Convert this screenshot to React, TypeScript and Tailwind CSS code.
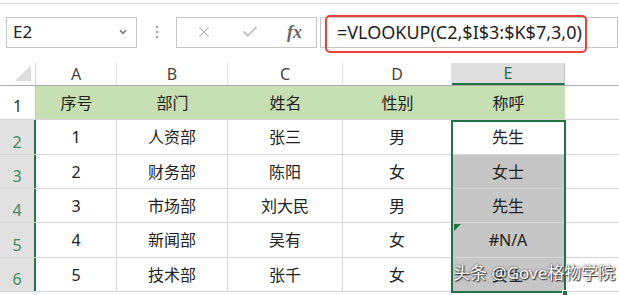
import { X, Check, ChevronDown } from "lucide-react";

const cols = ["A", "B", "C", "D", "E"];

const rows = [
  ["1", "人资部", "张三", "男", "先生"],
  ["2", "财务部", "陈阳", "女", "女士"],
  ["3", "市场部", "刘大民", "男", "先生"],
  ["4", "新闻部", "吴有", "女", "#N/A"],
  ["5", "技术部", "张千", "女", "女士"],
];

const heights = ["h-[35px]", "h-[34px]", "h-[34px]", "h-[35px]", "h-[34px]"];

const App = () => {
  return (
    <div
      className="w-[619px] h-[295px] bg-white overflow-hidden text-[#222]"
      style={{ fontFamily: '"Noto Sans", "Noto Sans CJK SC", sans-serif' }}
    >
      <div className="h-[4px] border-b border-[#d8d8d8]" />

      {/* formula bar */}
      <div className="flex items-center h-[59px] pb-[3px] relative">
        <div className="ml-[6px] w-[131px] h-[31px] border border-[#c6c6c6] flex items-center justify-between pl-[6px] pr-[8px]">
          <span className="text-[17px]">E2</span>
          <ChevronDown size={10} strokeWidth={4} className="text-[#777]" />
        </div>
        <div className="w-[39px] flex flex-col items-center gap-[3px]">
          <span className="w-[2px] h-[2px] bg-[#999]" />
          <span className="w-[2px] h-[2px] bg-[#999]" />
          <span className="w-[2px] h-[2px] bg-[#999]" />
        </div>
        <div className="w-[141px] h-[31px] border border-[#c6c6c6] flex items-center justify-around pl-[4px]">
          <X size={18} strokeWidth={1.5} className="text-[#bdbdbd]" />
          <Check size={18} strokeWidth={2.5} className="text-[#c4c4c4]" />
          <span
            className="italic text-[#666] text-[18px] font-bold"
            style={{ fontFamily: '"Liberation Serif", serif' }}
          >
            fx
          </span>
        </div>
        <div className="ml-[3px] w-[298px] h-[31px] border border-[#c6c6c6] flex items-center pl-[16px]">
          <span className="text-[18px] text-[#222]">=VLOOKUP(C2,$I$3:$K$7,3,0)</span>
        </div>
        <div className="absolute left-[325px] top-[11px] w-[262px] h-[38px] border-2 border-[#e8403a] rounded-[5px]" />
      </div>

      {/* sheet */}
      <div className="relative">
        <div className="flex h-[23px] border-b border-[#ababab]">
          <div className="w-[36px] border-r border-[#d6d6d6] relative">
            <div
              className="absolute right-[4px] bottom-[4px] w-[16px] h-[16px] bg-[#dedede]"
              style={{ clipPath: "polygon(100% 0, 100% 100%, 0 100%)" }}
            />
          </div>
          {cols.map((c, i) => (
            <div
              key={c}
              className={
                "flex items-center justify-center text-[16px] border-r " +
                (i === 0
                  ? "w-[81px] border-[#e3e3e3] text-[#444]"
                  : i === 1
                  ? "w-[111px] border-[#e3e3e3] text-[#444]"
                  : i === 2
                  ? "w-[115px] border-[#e3e3e3] text-[#444]"
                  : i === 3
                  ? "w-[109px] border-[#e3e3e3] text-[#444]"
                  : "w-[113px] bg-[#dedede] border-[#c6c6c6] text-[#217346] border-b-2 border-b-[#217346]")
              }
            >
              {c}
            </div>
          ))}
          <div className="flex-1" />
        </div>

        {/* header row 1 */}
        <div className="flex h-[34px] border-b border-[#d6d6d6]">
          <div className="w-[36px] border-r border-[#c6c6c6] flex items-end justify-center pb-[1px] text-[16px] text-[#333]">
            1
          </div>
          <div className="w-[529px] bg-[#c6e0b4] flex text-[16px] text-[#222]">
            <div className="w-[81px] flex items-center justify-center">序号</div>
            <div className="w-[111px] flex items-center justify-center">部门</div>
            <div className="w-[115px] flex items-center justify-center">姓名</div>
            <div className="w-[109px] flex items-center justify-center">性别</div>
            <div className="w-[113px] flex items-center justify-center">称呼</div>
          </div>
          <div className="flex-1" />
        </div>

        {rows.map((r, ri) => (
          <div key={ri} className={"flex border-b border-[#d6d6d6] " + heights[ri]}>
            <div className="w-[36px] bg-[#e1e1e1] border-r-2 border-[#217346] flex items-end justify-center text-[16px] text-[#3f8a5f] leading-none pb-[4px]">
              {ri + 2}
            </div>
            <div className="w-[81px] border-r border-[#d6d6d6] flex items-center justify-center text-[16px]">
              {r[0]}
            </div>
            <div className="w-[111px] border-r border-[#d6d6d6] flex items-center justify-center text-[16px]">
              {r[1]}
            </div>
            <div className="w-[115px] border-r border-[#d6d6d6] flex items-center justify-center text-[16px]">
              {r[2]}
            </div>
            <div className="w-[109px] border-r border-[#d6d6d6] flex items-center justify-center text-[16px]">
              {r[3]}
            </div>
            <div
              className={
                "w-[113px] border-r border-[#d6d6d6] flex items-center justify-center text-[16px] relative " +
                (ri === 0 ? "bg-white" : "bg-[#c6c6c6]")
              }
            >
              {r[4]}
              {ri === 3 && (
                <div
                  className="absolute left-[2px] top-[1px] w-[7px] h-[7px] bg-[#217346]"
                  style={{ clipPath: "polygon(0 0, 100% 0, 0 100%)" }}
                />
              )}
            </div>
            <div className="flex-1" />
          </div>
        ))}

        {/* selection E2:E6 */}
        <div className="absolute left-[451px] top-[57px] w-[115px] h-[173px] border-2 border-[#217346] pointer-events-none" />
        <div className="absolute left-[562px] top-[227px] w-[6px] h-[6px] bg-[#217346] border border-white" />

        <div
          className="absolute left-[453px] top-[197px] text-[17px] text-white"
          style={{ textShadow: "0 0 2px #333, 1px 1px 1px #333" }}
        >
          头条 @Gove格物学院
        </div>
      </div>
    </div>
  );
};

export default App;
